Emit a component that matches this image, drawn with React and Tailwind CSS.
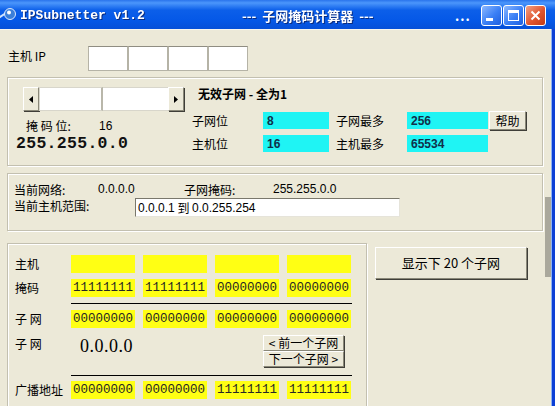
import React from "react";

const CJK = "font-['Noto_Sans_CJK_SC','Noto_Sans',sans-serif]";
const MONO = "font-['Liberation_Mono',monospace]";
const raised =
  "bg-[#ECE9D8] border border-t-white border-l-white border-r-[#8a8878] border-b-[#8a8878] shadow-[1px_1px_0_#3f3e38]";
const etched = "border border-[#c3c0b0] shadow-[1px_1px_0_#ffffff,inset_1px_1px_0_#ffffff]";
const sunken =
  "bg-white border border-t-[#7a786c] border-l-[#7a786c] border-r-[#e6e4da] border-b-[#e6e4da]";

function TitleButton({ kind }) {
  const close = kind === "close";
  return (
    <div
      className={`w-[21px] h-[21px] rounded-[3px] border border-white flex items-center justify-center ${
        close
          ? "bg-[linear-gradient(135deg,#f2a184,#e0552f_55%,#c23b16)]"
          : "bg-[linear-gradient(135deg,#8cb8ff,#3a7ff5_55%,#1f5fe0)]"
      }`}
    >
      {kind === "min" && <div className="w-[7px] h-[3px] bg-white mt-[8px] -ml-[4px]" />}
      {kind === "max" && <div className="w-[11px] h-[11px] border border-white border-t-[3px]" />}
      {close && (
        <svg width="11" height="11" viewBox="0 0 11 11">
          <path d="M1.5 1.5 L9.5 9.5 M9.5 1.5 L1.5 9.5" stroke="white" strokeWidth="2" />
        </svg>
      )}
    </div>
  );
}

function TitleBar() {
  return (
    <div className="h-[29px] shrink-0 flex items-center pt-[1px] text-white bg-[linear-gradient(180deg,#2a74ec_0%,#4b96fb_10%,#0c5fe9_35%,#0558e7_70%,#0650d8_100%)]">
      <div className="w-[20px] flex items-center -ml-[3px]">
        <svg width="20" height="16" viewBox="0 0 20 16">
          <path d="M0 12 L9 6" stroke="#cfe4ff" strokeWidth="2" />
          <circle cx="13" cy="7" r="5.5" fill="#3b7fd9" stroke="#dbe9ff" strokeWidth="1" />
          <circle cx="12" cy="5.5" r="2" fill="#ffffff" />
        </svg>
      </div>
      <div className={`w-[225px] pl-[3px] ${MONO} font-bold text-[13px] leading-none drop-shadow-[1px_1px_0_#0a2c80]`}>
        IPSubnetter v1.2
      </div>
      <div className={`w-[213px] ${CJK} font-bold text-[13px] leading-none whitespace-pre drop-shadow-[1px_1px_0_#0a2c80]`}>
        {"---  子网掩码计算器  ---"}
      </div>
      <div className={`w-[26px] ${CJK} font-bold text-[13px] leading-none tracking-[1px]`}>...</div>
      <div className="flex gap-[1px]">
        <TitleButton kind="min" />
        <TitleButton kind="max" />
        <TitleButton kind="close" />
      </div>
    </div>
  );
}

function Arrow({ dir }) {
  return (
    <div className={`w-[16px] h-[24px] ${raised} flex items-center justify-center`}>
      <svg width="4" height="7" viewBox="0 0 4 7">
        {dir === "left" ? <path d="M4 0 L0 3.5 L4 7 Z" fill="#000" /> : <path d="M0 0 L4 3.5 L0 7 Z" fill="#000" />}
      </svg>
    </div>
  );
}

function Slider() {
  return (
    <div className="flex w-[161px] h-[24px]">
      <Arrow dir="left" />
      <div className="w-[64px] h-[24px] bg-white border border-[#d8d6cb] border-r-[#b9b7aa] border-r-2" />
      <div className="flex-1 h-[24px] bg-white border-y border-[#d8d6cb]" />
      <Arrow dir="right" />
    </div>
  );
}

function Cyan({ value, w }) {
  return (
    <div className={`${w} h-[17px] bg-[#1ff4f4] flex items-center pl-[4px] font-['Liberation_Sans',sans-serif] font-bold text-[12px] text-[#10304a]`}>
      {value}
    </div>
  );
}

function Bits({ value }) {
  return (
    <div className={`w-[64px] h-[18px] bg-[#ffff14] flex items-center justify-center ${MONO} text-[12.5px] leading-none text-[#262626]`}>
      {value}
    </div>
  );
}

function BitsRow({ label, values }) {
  return (
    <div className="flex items-center h-[18px]">
      <div className="w-[56px] text-[12px] whitespace-pre">{label}</div>
      <div className="flex gap-[8px]">
        {values.map((v, i) => (
          <Bits key={i} value={v} />
        ))}
      </div>
    </div>
  );
}

export default function App() {
  const ipParts = ["", "", "", ""];
  return (
    <div className={`w-[555px] h-[406px] overflow-hidden bg-[#ECE9D8] flex flex-col relative ${CJK} text-[12px] text-black`}>
      <TitleBar />
      <div className="flex flex-1 min-h-0">
        <div className="flex-1 flex flex-col border-t border-[#f7f6f0]">
          {/* 主机 IP */}
          <div className="flex items-start mt-[16px] h-[25px]">
            <div className="w-[88px] pl-[8px] pt-[2px] leading-[16px]">主机 IP</div>
            {ipParts.map((p, i) => (
              <div key={i} className="w-[40px] h-[25px] bg-white border border-[#b5b3a6] border-t-[#8f8d82]" />
            ))}
          </div>

          {/* group 1 */}
          <div className={`ml-[7px] mt-[6px] w-[536px] h-[89px] shrink-0 ${etched} flex`}>
            <div className="w-[176px] flex flex-col">
              <div className="ml-[15px] mt-[9px]">
                <Slider />
              </div>
              <div className="ml-[18px] mt-[8px] flex h-[14px] leading-[14px] text-[12px]">
                <span className="w-[73px] whitespace-pre">{"掩 码 位:"}</span>
                <span className="font-['Liberation_Sans',sans-serif]">16</span>
              </div>
              <div className={`ml-[8px] mt-[2px] ${MONO} font-bold text-[16.5px] leading-[18px] tracking-[0.3px] text-[#111]`}>
                255.255.0.0
              </div>
            </div>
            <div className="flex flex-col">
              <div className="ml-[14px] mt-[9px] font-bold text-[12px] leading-[14px]">无效子网 - 全为1</div>
              <div className="flex items-center h-[19px] mt-[10px] ml-[8px]">
                <div className="w-[71px]">子网位</div>
                <Cyan value="8" w="w-[66px]" />
                <div className="w-[71px] ml-[7px]">子网最多</div>
                <Cyan value="256" w="w-[81px]" />
                <div className={`ml-[1px] w-[37px] h-[19px] ${raised} flex items-center justify-center`}>帮助</div>
              </div>
              <div className="flex items-center h-[19px] mt-[4px] ml-[8px]">
                <div className="w-[71px]">主机位</div>
                <Cyan value="16" w="w-[66px]" />
                <div className="w-[71px] ml-[7px]">主机最多</div>
                <Cyan value="65534" w="w-[81px]" />
              </div>
            </div>
          </div>

          {/* group 2 */}
          <div className={`ml-[7px] mt-[7px] w-[536px] h-[58px] shrink-0 ${etched} flex flex-col`}>
            <div className="flex mt-[9px] pl-[6px] h-[13px] leading-[13px]">
              <span className="w-[84px]">当前网络:</span>
              <span className="w-[86px] font-['Liberation_Sans',sans-serif]">0.0.0.0</span>
              <span className="w-[89px]">子网掩码:</span>
              <span className="font-['Liberation_Sans',sans-serif]">255.255.0.0</span>
            </div>
            <div className="flex items-start mt-[3px] pl-[6px]">
              <span className="w-[121px] leading-[13px]">当前主机范围:</span>
              <div className={`w-[265px] h-[19px] -mt-[1px] ${sunken} flex items-center pl-[2px] whitespace-pre`}>
                <span className="font-['Liberation_Sans',sans-serif]">0.0.0.1</span>
                <span>{" 到 "}</span>
                <span className="font-['Liberation_Sans',sans-serif]">0.0.255.254</span>
              </div>
            </div>
          </div>

          {/* group 3 + button */}
          <div className="flex items-start mt-[12px]">
            <div className={`ml-[7px] w-[360px] h-[200px] shrink-0 ${etched} flex flex-col pl-[7px]`}>
              <div className="mt-[11px]">
                <BitsRow label="主机" values={["", "", "", ""]} />
              </div>
              <div className="mt-[6px]">
                <BitsRow label="掩码" values={["11111111", "11111111", "00000000", "00000000"]} />
              </div>
              <div className="ml-[56px] mt-[6px] w-[281px] h-[1px] bg-black" />
              <div className="mt-[6px]">
                <BitsRow label="子 网" values={["00000000", "00000000", "00000000", "00000000"]} />
              </div>
              <div className="flex mt-[7px] h-[33px]">
                <div className="w-[65px] pt-[2px] whitespace-pre leading-[14px]">{"子 网"}</div>
                <div className="w-[183px] pt-[2px] font-['Liberation_Serif',serif] text-[18px] leading-[18px] tracking-[0.5px]">
                  0.0.0.0
                </div>
                <div className="flex flex-col">
                  <div className={`w-[81px] h-[16px] ${raised} flex items-center justify-center whitespace-pre leading-none`}>
                    {"< 前一个子网"}
                  </div>
                  <div className={`w-[81px] h-[16px] ${raised} flex items-center justify-center whitespace-pre leading-none`}>
                    {"下一个子网 >"}
                  </div>
                </div>
              </div>
              <div className="ml-[56px] mt-[7px] w-[281px] h-[1px] bg-black" />
              <div className="mt-[5px]">
                <BitsRow label="广播地址" values={["00000000", "00000000", "11111111", "11111111"]} />
              </div>
            </div>
            <div className={`ml-[8px] mt-[4px] w-[152px] h-[32px] ${raised} shadow-[1px_1px_0_#3f3e38,2px_2px_0_#8a8878] flex items-center justify-center text-[13px]`}>
              显示下 20 个子网
            </div>
          </div>
        </div>
        <div className="w-[4px] bg-[#0b3fd6] border-l border-[#8fb2f0]" />
      </div>
      <div className="absolute left-[545px] top-[197px] w-[6px] h-[80px] bg-[#aaa89c]" />
    </div>
  );
}
